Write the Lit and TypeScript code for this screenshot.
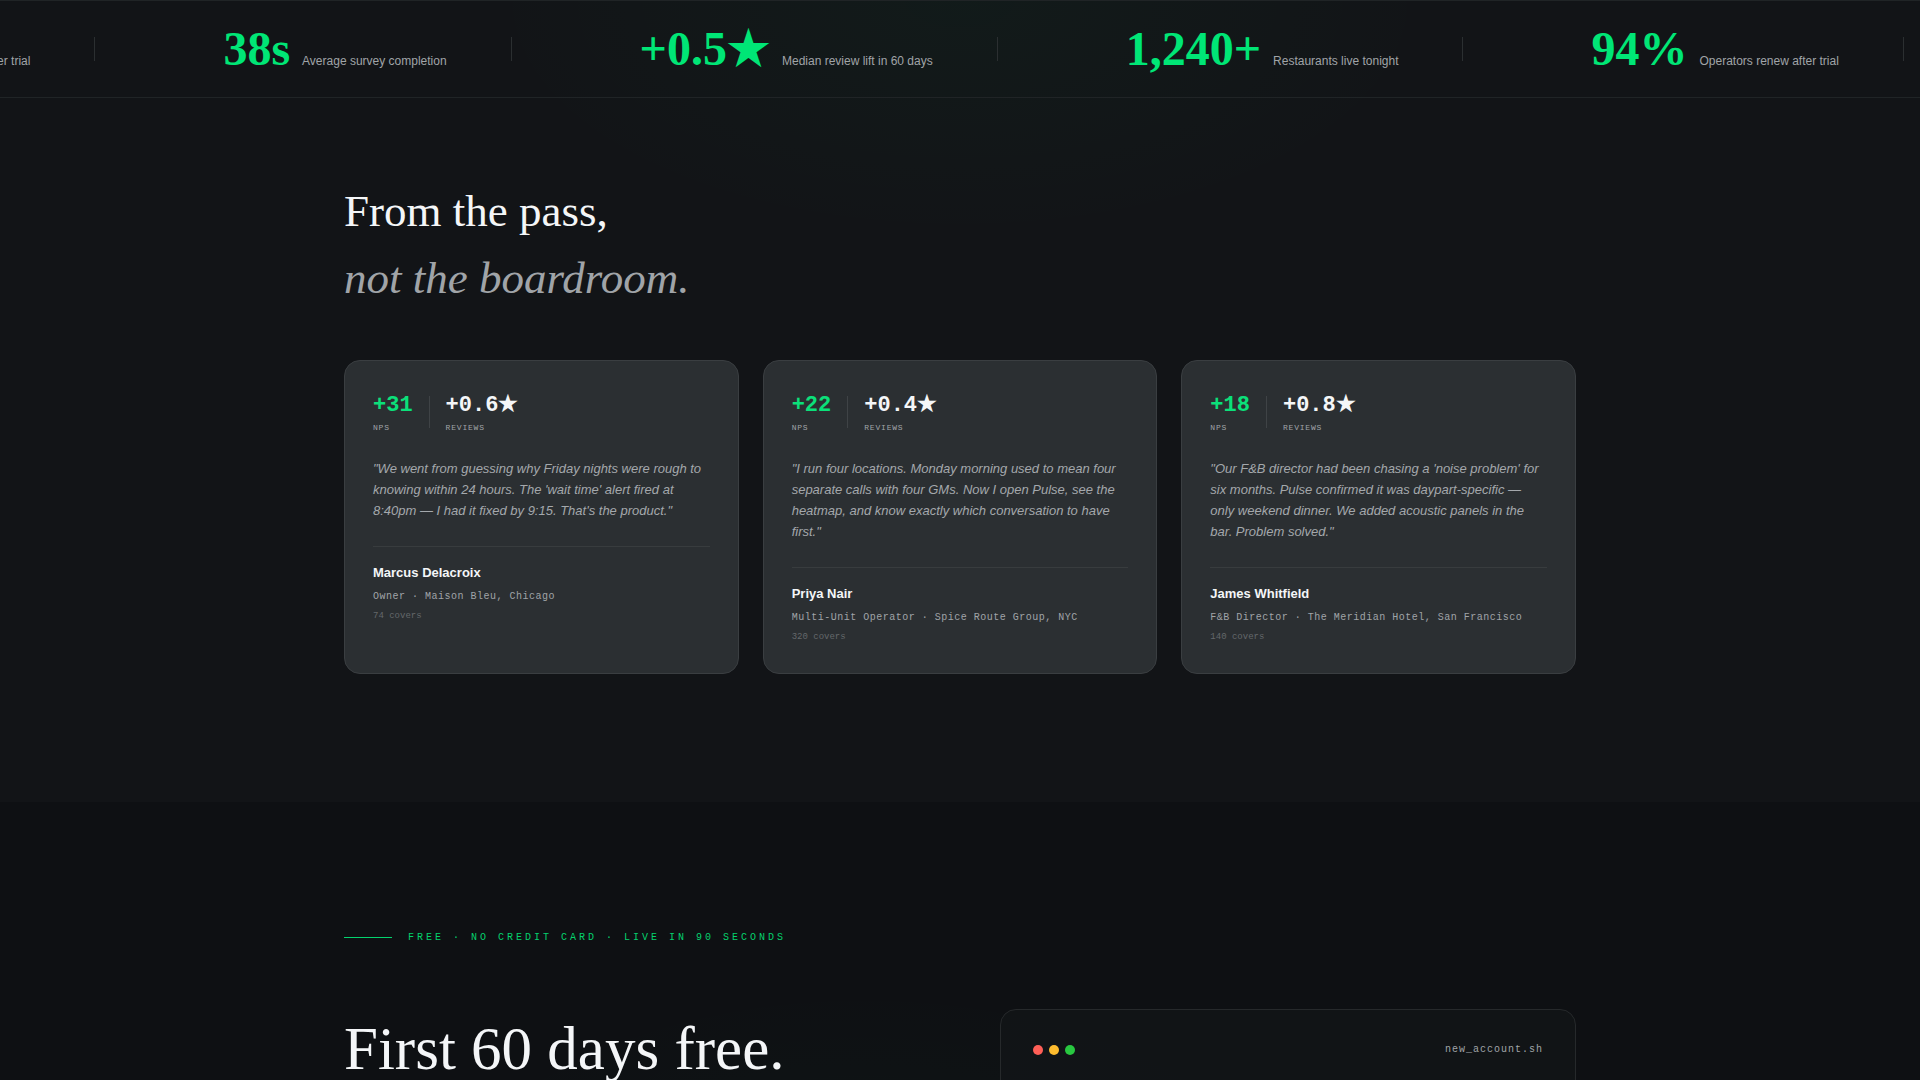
import { LitElement, html, css } from "lit";
import { customElement, property } from "lit/decorators.js";

interface Stat {
  value: string;
  label: string;
}

interface Testimonial {
  nps: string;
  reviews: string;
  quote: string;
  name: string;
  role: string;
  covers: string;
}

const STATS: Stat[] = [
  { value: "94%", label: "Operators renew after trial" },
  { value: "38s", label: "Average survey completion" },
  { value: "+0.5★", label: "Median review lift in 60 days" },
  { value: "1,240+", label: "Restaurants live tonight" },
];

const TESTIMONIALS: Testimonial[] = [
  {
    nps: "+31",
    reviews: "+0.6★",
    quote:
      "\"We went from guessing why Friday nights were rough to knowing within 24 hours. The 'wait time' alert fired at 8:40pm — I had it fixed by 9:15. That's the product.\"",
    name: "Marcus Delacroix",
    role: "Owner · Maison Bleu, Chicago",
    covers: "74 covers",
  },
  {
    nps: "+22",
    reviews: "+0.4★",
    quote:
      '"I run four locations. Monday morning used to mean four separate calls with four GMs. Now I open Pulse, see the heatmap, and know exactly which conversation to have first."',
    name: "Priya Nair",
    role: "Multi-Unit Operator · Spice Route Group, NYC",
    covers: "320 covers",
  },
  {
    nps: "+18",
    reviews: "+0.8★",
    quote:
      "\"Our F&B director had been chasing a 'noise problem' for six months. Pulse confirmed it was daypart-specific — only weekend dinner. We added acoustic panels in the bar. Problem solved.\"",
    name: "James Whitfield",
    role: "F&B Director · The Meridian Hotel, San Francisco",
    covers: "140 covers",
  },
];

@customElement("stat-ticker")
class StatTicker extends LitElement {
  static styles = css`
    :host {
      display: block;
      overflow: hidden;
      border-top: 1px solid #202426;
      border-bottom: 1px solid #202426;
    }
    .track {
      display: flex;
      width: max-content;
      padding: 24px 0;
      margin: 0 0 0 -217px;
      list-style: none;
    }
    .item {
      display: flex;
      align-items: center;
      gap: 64px;
      padding-right: 128px;
    }
    .stat {
      display: flex;
      align-items: baseline;
      gap: 12px;
      white-space: nowrap;
    }
    .value {
      font: 700 48px/48px "Liberation Serif", serif;
      color: #00e676;
    }
    .label {
      font-size: 12px;
      line-height: 18px;
      color: #a0a4a8;
    }
    .divider {
      width: 1px;
      height: 24px;
      background: #2b2f31;
    }
  `;

  render() {
    return html`
      <ul class="track">
        ${[...STATS, STATS[0]].map(
          (s) => html`
            <li class="item">
              <span class="stat">
                <span class="value">${s.value}</span>
                <span class="label">${s.label}</span>
              </span>
              <span class="divider"></span>
            </li>
          `,
        )}
      </ul>
    `;
  }
}

@customElement("testimonial-card")
class TestimonialCard extends LitElement {
  @property({ attribute: false }) item!: Testimonial;

  static styles = css`
    :host {
      display: block;
      box-sizing: border-box;
      padding: 28px;
      border: 1px solid #3a3e41;
      border-radius: 16px;
      background: #2b2f32;
    }
    .metrics {
      display: flex;
      align-items: center;
      gap: 16px;
      margin-bottom: 24px;
      font-family: "Liberation Mono", "Liberation Serif", serif;
    }
    .figure {
      font-size: 22px;
      line-height: 33px;
      font-weight: 700;
      color: #f4f6f8;
    }
    .figure.green {
      color: #0be07a;
    }
    .caption {
      font-size: 8px;
      line-height: 12px;
      letter-spacing: 0.1em;
      text-transform: uppercase;
      color: #a0a4a8;
    }
    .rule {
      width: 1px;
      height: 32px;
      background: #3f4346;
    }
    .quote {
      margin: 0 0 25px;
      font-size: 13px;
      line-height: 21px;
      font-style: italic;
      color: #a4a8ac;
    }
    .person {
      padding: 16px 0 1px;
      border-top: 1px solid #383c3e;
    }
    .name {
      font-size: 13px;
      line-height: 20px;
      font-weight: 700;
      color: #f4f6f8;
    }
    .role {
      margin-top: 6px;
      font: 10px/15px "Liberation Mono", monospace;
      letter-spacing: 0.05em;
      color: #a0a4a8;
    }
    .covers {
      margin-top: 5px;
      font: 9px/14px "Liberation Mono", monospace;
      color: #64686b;
    }
  `;

  render() {
    const t = this.item;
    return html`
      <div class="metrics">
        <div>
          <div class="figure green">${t.nps}</div>
          <div class="caption">NPS</div>
        </div>
        <div class="rule"></div>
        <div>
          <div class="figure">${t.reviews}</div>
          <div class="caption">Reviews</div>
        </div>
      </div>
      <p class="quote">${t.quote}</p>
      <div class="person">
        <div class="name">${t.name}</div>
        <div class="role">${t.role}</div>
        <div class="covers">${t.covers}</div>
      </div>
    `;
  }
}

@customElement("terminal-card")
class TerminalCard extends LitElement {
  static styles = css`
    :host {
      display: block;
      box-sizing: border-box;
      min-height: 400px;
      padding: 32px;
      border: 1px solid #26292b;
      border-radius: 16px;
      background: #131518cc;
    }
    .bar {
      display: flex;
      align-items: center;
      justify-content: space-between;
    }
    .dots {
      display: flex;
      gap: 6px;
    }
    .dot {
      width: 10px;
      height: 10px;
      border-radius: 50%;
    }
    .red {
      background: #ff5f57;
    }
    .yellow {
      background: #febc2e;
    }
    .green {
      background: #28c840;
    }
    .file {
      font: 10px/15px "Liberation Mono", monospace;
      letter-spacing: 0.1em;
      color: #a0a4a8;
    }
  `;

  render() {
    return html`
      <div class="bar">
        <div class="dots">
          <span class="dot red"></span>
          <span class="dot yellow"></span>
          <span class="dot green"></span>
        </div>
        <span class="file">new_account.sh</span>
      </div>
    `;
  }
}

@customElement("app-root")
class AppRoot extends LitElement {
  static styles = css`
    :host {
      display: block;
      height: 100vh;
      overflow: hidden;
      background: #0e1013;
      color: #f4f6f8;
      font-family: "Liberation Sans", Arial, sans-serif;
    }
    .proof {
      padding-bottom: 128px;
      background:
        radial-gradient(ellipse 480px 240px at 50% 0, #00e67608, #00e67600) no-repeat,
        #121417;
    }
    .container {
      max-width: 1232px;
      margin: 0 auto;
      padding: 0 24px;
    }
    .title {
      margin: 0;
      padding: 80px 0 48px;
      font: 400 45px/67px "Liberation Serif", serif;
    }
    .title em {
      display: block;
      color: #a0a4a8;
    }
    .cards {
      display: grid;
      grid-template-columns: repeat(3, 1fr);
      gap: 24px;
    }
    .cta {
      padding: 128px 0;
      background: radial-gradient(ellipse 480px 280px at 45% 460px, #00e67608, #00e67600) no-repeat;
    }
    .eyebrow {
      display: flex;
      align-items: center;
      gap: 16px;
      margin: 0 0 64px;
      font: 10px/15px "Liberation Mono", monospace;
      letter-spacing: 0.3em;
      text-transform: uppercase;
      color: #04d26e;
    }
    .eyebrow::before {
      content: "";
      width: 48px;
      height: 1px;
      background: #04d26e;
    }
    .split {
      display: grid;
      grid-template-columns: 1fr 1fr;
      gap: 80px;
    }
    .headline {
      margin: 0;
      padding-top: 8px;
      font: 400 61px/63px "Liberation Serif", serif;
    }
  `;

  render() {
    return html`
      <section class="proof">
        <stat-ticker></stat-ticker>
        <div class="container">
          <h2 class="title">From the pass,<em>not the boardroom.</em></h2>
          <div class="cards">
            ${TESTIMONIALS.map((t) => html`<testimonial-card .item=${t}></testimonial-card>`)}
          </div>
        </div>
      </section>
      <section class="cta">
        <div class="container">
          <p class="eyebrow">Free · No credit card · Live in 90 seconds</p>
          <div class="split">
            <h2 class="headline">First 60 days free.</h2>
            <terminal-card></terminal-card>
          </div>
        </div>
      </section>
    `;
  }
}
